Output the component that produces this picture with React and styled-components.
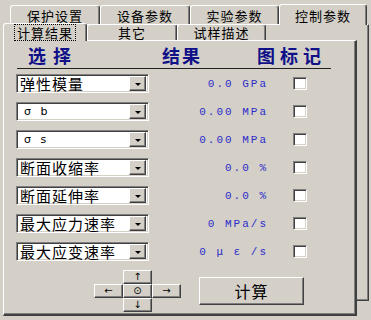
import React from "react";
import styled, { createGlobalStyle, css } from "styled-components";

const GlobalStyle = createGlobalStyle`
  body {
    margin: 0;
    background: #d4d0c8;
    font-family: "Noto Sans CJK SC", "Liberation Sans", sans-serif;
  }
`;

const raised = css`
  border-top: 1px solid #ffffff;
  border-left: 1px solid #ffffff;
  border-right: 1px solid #404040;
  border-bottom: 1px solid #404040;
  box-shadow: inset -1px -1px 0 #808080;
`;

const sunken = css`
  border-top: 1px solid #808080;
  border-left: 1px solid #808080;
  border-right: 1px solid #ffffff;
  border-bottom: 1px solid #ffffff;
  box-shadow: inset 1px 1px 0 #404040, inset -1px -1px 0 #d4d0c8;
`;

const rows = [
  { label: "弹性模量", value: "0.0 GPa" },
  { label: "σ b", value: "0.00 MPa", small: true },
  { label: "σ s", value: "0.00 MPa", small: true },
  { label: "断面收缩率", value: "0.0 %" },
  { label: "断面延伸率", value: "0.0 %" },
  { label: "最大应力速率", value: "0 MPa/s" },
  { label: "最大应变速率", value: "0 μ ε /s" },
];

const Screen = styled.div`
  width: 371px;
  height: 320px;
  padding-top: 3px;
  box-sizing: border-box;
  overflow: hidden;
`;

const TabStrip = styled.div`
  display: flex;
  align-items: flex-end;
  height: ${(p) => p.h}px;
  padding-left: ${(p) => p.indent}px;
`;

const Tab = styled.div`
  position: relative;
  box-sizing: border-box;
  width: ${(p) => p.w}px;
  height: ${(p) => (p.active ? p.h + 2 : p.h)}px;
  margin-bottom: ${(p) => (p.active ? -1 : 0)}px;
  z-index: ${(p) => (p.active ? 2 : 1)};
  background: #d4d0c8;
  border-top: 1px solid #ffffff;
  border-left: 1px solid #ffffff;
  border-right: 1px solid #404040;
  border-radius: 3px 3px 0 0;
  box-shadow: inset -1px 0 0 #808080;
  display: flex;
  align-items: center;
  justify-content: center;
  font-size: 13px;
  letter-spacing: 1px;
  color: #000;
  line-height: 1;
`;

const FocusText = styled.span`
  outline: 1px dotted #000;
  outline-offset: 1px;
  padding: 0 1px;
`;

const OuterPanel = styled.div`
  box-sizing: border-box;
  margin-left: 6px;
  width: 363px;
  height: 277px;
  ${raised}
`;

const InnerControl = styled.div`
  margin: -2px 0 0 -4px;
  width: 354px;
`;

const InnerPanel = styled.div`
  position: relative;
  z-index: 1;
  box-sizing: border-box;
  width: 354px;
  height: 276px;
  background: #d4d0c8;
  border-top: 1px solid #ffffff;
  border-left: 1px solid #ffffff;
  border-right: 2px solid #404040;
  border-bottom: 2px solid #404040;
  box-shadow: inset -1px -1px 0 #808080;
  padding: 4px 0 0 12px;
`;

const Header = styled.div`
  display: grid;
  grid-template-columns: 146px 95px auto;
  height: 20px;
  align-items: center;
`;

const Heading = styled.div`
  padding-left: ${(p) => p.pad || 0}px;
  font-size: 18px;
  font-weight: bold;
  letter-spacing: ${(p) => p.spacing}px;
  color: #101088;
  line-height: 1;
`;

const Divider = styled.div`
  margin: 3px 0 0 1px;
  width: 314px;
  height: 1px;
  background: #202020;
`;

const List = styled.div`
  display: flex;
  flex-direction: column;
  gap: 9px;
  margin-top: 5px;
`;

const Row = styled.div`
  display: grid;
  grid-template-columns: 133px 117px 41px;
  align-items: center;
  height: 19px;
`;

const Select = styled.div`
  box-sizing: border-box;
  display: flex;
  align-items: center;
  height: 19px;
  background: #ffffff;
  ${sunken}
  padding: 2px 2px 2px 3px;
`;

const SelectText = styled.span`
  flex: 1;
  font-size: ${(p) => (p.small ? 11 : 15)}px;
  letter-spacing: ${(p) => (p.small ? 3 : 1)}px;
  padding-left: ${(p) => (p.small ? 4 : 0)}px;
  font-family: ${(p) =>
    p.small ? '"DejaVu Sans", sans-serif' : '"Noto Sans CJK SC", sans-serif'};
  color: #000;
  white-space: nowrap;
  line-height: 15px;
`;

const DropBtn = styled.div`
  box-sizing: border-box;
  flex: none;
  width: 17px;
  height: 15px;
  background: #d4d0c8;
  ${raised}
  display: flex;
  align-items: center;
  justify-content: center;
`;

const Caret = styled.span`
  width: 0;
  height: 0;
  border-left: 3px solid transparent;
  border-right: 3px solid transparent;
  border-top: 3px solid #000;
  margin-top: 1px;
`;

const Value = styled.div`
  text-align: right;
  font-family: "Liberation Mono", monospace;
  font-size: 11px;
  letter-spacing: 2px;
  margin-right: -2px;
  color: #2c2cc8;
  white-space: pre;
`;

const Check = styled.div`
  justify-self: end;
  box-sizing: border-box;
  width: 14px;
  height: 13px;
  background: #ffffff;
  ${sunken}
`;

const Controls = styled.div`
  display: flex;
  align-items: center;
  margin: 9px 0 0 78px;
  gap: 18px;
`;

const Pad = styled.div`
  display: grid;
  grid-template-columns: repeat(3, 29px);
  grid-template-rows: repeat(3, 14px);
`;

const PadBtn = styled.div`
  box-sizing: border-box;
  grid-column: ${(p) => p.col};
  grid-row: ${(p) => p.row};
  ${raised}
  display: flex;
  align-items: center;
  justify-content: center;
  font-family: "DejaVu Sans", sans-serif;
  font-size: 10px;
  line-height: 1;
  color: #000;
`;

const CalcBtn = styled.div`
  box-sizing: border-box;
  width: 105px;
  height: 28px;
  ${raised}
  display: flex;
  align-items: center;
  justify-content: center;
  font-size: 16px;
  letter-spacing: 1px;
  color: #000;
`;

export default function App() {
  return (
    <Screen>
      <GlobalStyle />
      <TabStrip h={21} indent={10}>
        <Tab w={90} h={19}>保护设置</Tab>
        <Tab w={90} h={19}>设备参数</Tab>
        <Tab w={89} h={19}>实验参数</Tab>
        <Tab w={88} h={19} active>控制参数</Tab>
      </TabStrip>
      <OuterPanel>
        <InnerControl>
          <TabStrip h={17} indent={0}>
            <Tab w={84} h={16} active>
              <FocusText>计算结果</FocusText>
            </Tab>
            <Tab w={90} h={16}>其它</Tab>
            <Tab w={89} h={16}>试样描述</Tab>
          </TabStrip>
          <InnerPanel>
            <Header>
              <Heading pad={12} spacing={7}>选择</Heading>
              <Heading spacing={2}>结果</Heading>
              <Heading spacing={5}>图标记</Heading>
            </Header>
            <Divider />
            <List>
              {rows.map((r) => (
                <Row key={r.label}>
                  <Select>
                    <SelectText small={r.small}>{r.label}</SelectText>
                    <DropBtn>
                      <Caret />
                    </DropBtn>
                  </Select>
                  <Value>{r.value}</Value>
                  <Check />
                </Row>
              ))}
            </List>
            <Controls>
              <Pad>
                <PadBtn col={2} row={1}>↑</PadBtn>
                <PadBtn col={1} row={2}>←</PadBtn>
                <PadBtn col={2} row={2}>⊙</PadBtn>
                <PadBtn col={3} row={2}>→</PadBtn>
                <PadBtn col={2} row={3}>↓</PadBtn>
              </Pad>
              <CalcBtn>计算</CalcBtn>
            </Controls>
          </InnerPanel>
        </InnerControl>
      </OuterPanel>
    </Screen>
  );
}
